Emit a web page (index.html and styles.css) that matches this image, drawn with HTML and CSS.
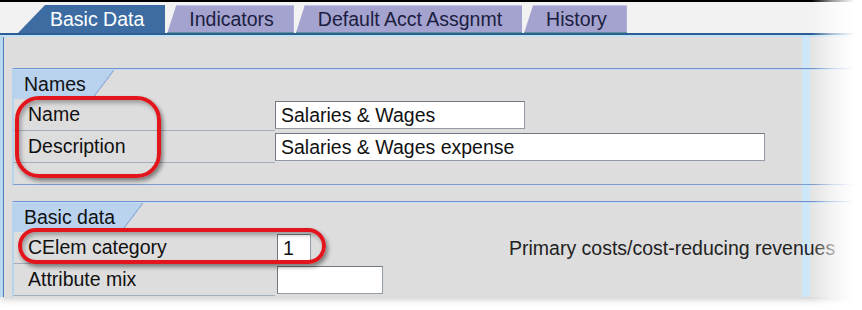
FILE: index.html
```html
<!DOCTYPE html>
<html lang="en">
<head>
  <meta charset="UTF-8">
  <title>Cost Element - Basic Data</title>
  <link rel="stylesheet" href="styles.css">
</head>
<body>
  <div class="screen">
    <div class="topbar"></div>

    <!-- tab strip -->
    <div class="tabstrip">
      <div class="tab active">Basic Data</div>
      <div class="tab">Indicators</div>
      <div class="tab">Default Acct Assgnmt</div>
      <div class="tab">History</div>
    </div>

    <div class="panel">
      <div class="group">
        <div class="group-title">Names</div>
        <div class="row">
          <span class="label">Name</span>
          <span class="field w-name">Salaries &amp; Wages</span>
        </div>
        <div class="row">
          <span class="label">Description</span>
          <span class="field w-desc">Salaries &amp; Wages expense</span>
        </div>
      </div>

      <div class="group">
        <div class="group-title">Basic data</div>
        <div class="row">
          <span class="label">CElem category</span>
          <span class="field w-cat">1</span>
          <span class="note">Primary costs/cost-reducing revenues</span>
        </div>
        <div class="row">
          <span class="label">Attribute mix</span>
          <span class="field w-mix"></span>
        </div>
      </div>
    </div>

    <!-- red highlight marks -->
    <div class="mark mark-names"></div>
    <div class="mark mark-cat"></div>

    <div class="fade-right"></div>
  </div>
</body>
</html>
```

FILE: styles.css
```css
body {
  margin: 0;
  background: #fff;
  font-family: "Liberation Sans", Arial, sans-serif;
  font-size: 19.5px;
  color: #111;
}
.screen {
  position: relative;
  width: 862px;
  height: 310px;
  overflow: hidden;
  background: #fff;
}
.topbar {
  height: 2px;
  background: #000;
}

/* tabs */
.tabstrip {
  display: flex;
  gap: 2px;
  height: 28px;
  padding: 3px 0 0 18px;
  background: #f2f2f2;
  border-bottom: 2px solid #2e6096;
}
.tab {
  line-height: 28px;
  padding: 0 20px 0 22px;
  color: #1b2040;
  background: #a4a2cf;
  box-shadow: inset 0 1px #c4c2e4, inset 0 -1px #5f8f9c;
  clip-path: polygon(9px 0, 100% 0, 100% 100%, 0 100%);
  white-space: nowrap;
}
.tab.active {
  padding: 0 21px 0 32px;
  color: #fff;
  background: #3c6ca2;
  box-shadow: none;
  clip-path: polygon(27px 0, 100% 0, 100% 100%, 0 100%);
}

/* panel */
.panel {
  height: 229px;
  padding: 31px 0 0 9px;
  overflow: hidden;
  border-top: 2px solid #c2e1f5;
  border-left: 3px solid #b8d8ef;
  box-shadow: inset 1px 0 #4f7db4, 0 3px 6px rgba(0, 0, 0, 0.18);
  background: linear-gradient(to right, #dddddd 799px, #cde7f8 799px, #cde7f8 807px, #e4e4e4 807px);
}
.group {
  display: flex;
  flex-direction: column;
  padding: 1px 0 21px 0;
  border-top: 1px solid #6e8fcb;
  border-left: 2px solid #b5d4ee;
  border-bottom: 1px solid #7c9bcf;
  box-shadow: inset 0 1px #c3def4;
}
.group + .group {
  margin-top: 16px;
}
.group-title {
  align-self: flex-start;
  height: 29px;
  line-height: 29px;
  padding: 0 28px 0 10px;
  background:
    linear-gradient(to bottom right, #b9d3ef calc(50% - 1px), #86a5d6 50%, transparent calc(50% + 1px)) right / 22px 100% no-repeat,
    linear-gradient(#b9d3ef, #b9d3ef) left / calc(100% - 22px) 100% no-repeat;
}
.row {
  display: grid;
  grid-template-columns: 261px auto 1fr;
  align-items: center;
  height: 32px;
}
.label {
  align-self: stretch;
  display: flex;
  align-items: center;
  padding-left: 14px;
  border-bottom: 1px solid #a3adbb;
}
.field {
  box-sizing: border-box;
  height: 28px;
  line-height: 26px;
  padding: 0 5px;
  background: #fff;
  border: 1px solid #939ca6;
  border-top-color: #707982;
  border-left-color: #707982;
  white-space: nowrap;
}
.w-name { width: 250px; }
.w-desc { width: 490px; }
.w-cat  { width: 34px; margin-left: 2px; }
.w-mix  { width: 106px; margin-left: 2px; }
.note {
  margin-left: 198px;
  color: #222;
  white-space: nowrap;
}

/* red highlight marks */
.mark {
  position: absolute;
  box-sizing: border-box;
  border: 4px solid #e2151c;
  box-shadow: 2px 3px 4px rgba(0, 0, 0, 0.45), inset 2px 3px 4px rgba(0, 0, 0, 0.3);
}
.mark-names {
  left: 15px;
  top: 96px;
  width: 146px;
  height: 82px;
  border-radius: 24px;
}
.mark-cat {
  left: 18px;
  top: 228px;
  width: 308px;
  height: 36px;
  border-radius: 18px;
}

/* page fade at the right edge */
.fade-right {
  position: absolute;
  top: 0;
  right: 0;
  width: 50px;
  height: 100%;
  background: linear-gradient(to right, rgba(255, 255, 255, 0), rgba(255, 255, 255, 0.6) 40%, #fff 85%);
}
```
